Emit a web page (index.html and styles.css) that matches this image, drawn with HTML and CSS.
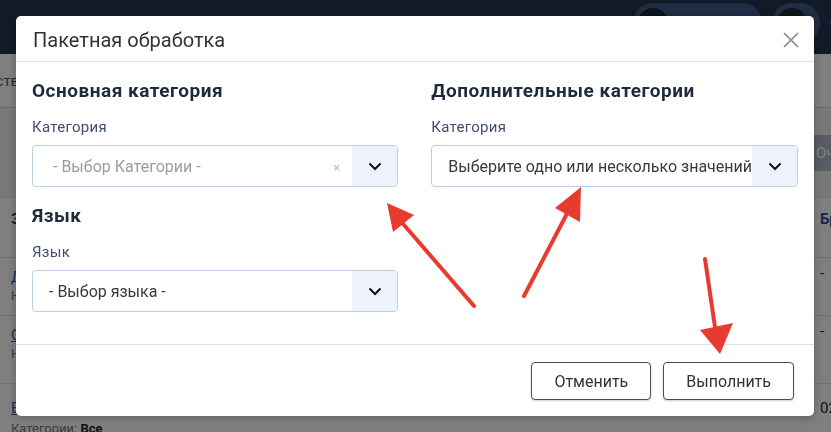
FILE: index.html
```html
<!DOCTYPE html>
<html lang="ru">
<head>
  <meta charset="UTF-8">
  <title>Пакетная обработка</title>
  <link rel="stylesheet" href="styles.css">
</head>
<body>

  <div class="page">
    <header class="topbar">
      <span class="topbar-count">⁝ 12 1</span>
      <div class="pill">
        <span class="pill-icon"><svg width="12" height="14" viewBox="0 0 12 14"><rect x="0" y="2" width="12" height="12" rx="2" fill="#cfd8e6"/><rect x="3" y="0" width="6" height="4" rx="1" fill="#cfd8e6"/></svg></span>
        <span>Задачи</span>
      </div>
      <div class="pill pill-user">
        <span class="pill-icon"><svg width="12" height="14" viewBox="0 0 12 14"><circle cx="6" cy="4" r="3.5" fill="#cfd8e6"/><path d="M0 14c0-4 2.5-6 6-6s6 2 6 6z" fill="#cfd8e6"/></svg></span>
      </div>
      <span class="topbar-more">С</span>
    </header>

    <nav class="tabs">
      <span class="tab">Свойств</span>
    </nav>

    <div class="filters">
      <button class="clear-btn">Очистить</button>
    </div>

    <div class="table">
      <div class="row row-head">
        <div class="cell">Заголовок</div>
        <div class="cell cell-right">Бренд</div>
      </div>
      <div class="row row-short">
        <div class="cell"><a href="#">Демо товар</a><small>Нет категорий</small></div>
        <div class="cell cell-right">-</div>
      </div>
      <div class="row">
        <div class="cell"><a href="#">Садовый набор</a><small>Нет категорий</small></div>
        <div class="cell cell-right">-</div>
      </div>
      <div class="row row-last">
        <div class="cell"><a href="#">Велосипед горный</a><small>Категории: <b>Все</b></small></div>
        <div class="cell cell-right">02</div>
      </div>
    </div>
  </div>

  <div class="backdrop">
    <div class="modal">
      <div class="modal-header">
        <h3>Пакетная обработка</h3>
        <button class="close-btn">
          <svg width="16" height="16" viewBox="0 0 16 16"><path d="M1 1L15 15M15 1L1 15" stroke="#8a8a8a" stroke-width="1.7"/></svg>
        </button>
      </div>

      <div class="modal-body">
        <div class="column">
          <div class="section">
            <h4>Основная категория</h4>
            <label>Категория</label>
            <div class="select">
              <span class="select-value placeholder">- Выбор Категории -</span>
              <span class="select-clear">×</span>
              <span class="select-arrow"><svg width="14" height="9" viewBox="0 0 14 9"><path d="M1.5 1.5L7 7l5.5-5.5" stroke="#111" stroke-width="2" fill="none"/></svg></span>
            </div>
          </div>
          <div class="section">
            <h4>Язык</h4>
            <label>Язык</label>
            <div class="select">
              <span class="select-value">- Выбор языка -</span>
              <span class="select-arrow"><svg width="14" height="9" viewBox="0 0 14 9"><path d="M1.5 1.5L7 7l5.5-5.5" stroke="#111" stroke-width="2" fill="none"/></svg></span>
            </div>
          </div>
        </div>
        <div class="column">
          <div class="section">
            <h4>Дополнительные категории</h4>
            <label>Категория</label>
            <div class="select">
              <span class="select-value">Выберите одно или несколько значений</span>
              <span class="select-arrow"><svg width="14" height="9" viewBox="0 0 14 9"><path d="M1.5 1.5L7 7l5.5-5.5" stroke="#111" stroke-width="2" fill="none"/></svg></span>
            </div>
          </div>
        </div>
      </div>

      <div class="modal-footer">
        <button class="btn">Отменить</button>
        <button class="btn">Выполнить</button>
      </div>
    </div>

    <!-- annotation arrows -->
    <svg class="arrows" width="831" height="432" viewBox="0 0 831 432">
      <g stroke="#e63b2e" stroke-width="4" stroke-linecap="round" fill="none">
        <path d="M474 306L398 218"/>
        <path d="M524 296L572 204"/>
        <path d="M705 259L716 334"/>
      </g>
      <g fill="#e63b2e">
        <path d="M387 203L393 232L414 215Z"/>
        <path d="M581 187L555 208L580 222Z"/>
        <path d="M720 354L700 330L733 323Z"/>
      </g>
    </svg>
  </div>

</body>
</html>
```

FILE: styles.css
```css
body {
  margin: 0;
  background-color: #f4f5f7;
  font-family: Roboto, "Noto Sans", sans-serif;
  color: #222;
}

/* page behind the dialog */
.page {
  width: 831px;
  height: 432px;
  overflow: hidden;
}

.topbar {
  height: 54px;
  background-color: #243450;
  display: flex;
  align-items: flex-start;
  justify-content: flex-end;
  gap: 10px;
  padding-top: 3px;
  box-sizing: border-box;
  white-space: nowrap;
  overflow: hidden;
}

.topbar-count {
  color: #cfd8e6;
  font-size: 13px;
  margin-top: 12px;
  margin-right: 18px;
}

.pill {
  display: flex;
  align-items: center;
  gap: 10px;
  height: 40px;
  padding: 0 5px;
  border-radius: 20px;
  background-color: #3e5c8a;
  color: #dfe6f0;
  font-size: 14px;
  width: 129px;
  box-sizing: border-box;
  flex-shrink: 0;
}

.pill-icon {
  width: 30px;
  height: 30px;
  border-radius: 50%;
  background-color: #1c2638;
  display: flex;
  align-items: center;
  justify-content: center;
}

.pill-user {
  width: 48px;
}

.topbar-more {
  color: #dfe6f0;
  font-size: 14px;
  margin-top: 12px;
  margin-right: -8px;
}

.tabs {
  height: 53px;
  border-bottom: 1px solid #cfd4da;
  display: flex;
  align-items: center;
  background-color: #fff;
}

.tab {
  margin-left: -40px;
  color: #4a5a72;
  font-size: 15px;
}

.filters {
  height: 89px;
  display: flex;
  align-items: center;
  width: 900px;
  background-color: #f0f1f3;
}

.clear-btn {
  margin-left: 810px;
  height: 36px;
  padding: 0 6px;
  border: none;
  border-radius: 4px;
  background-color: #b2bac6;
  color: #fff;
  font-family: inherit;
  font-size: 15px;
}

.table {
  width: 900px;
  background-color: #fff;
}

.row {
  display: grid;
  grid-template-columns: 809px 1fr;
  border-top: 1px solid #dde1e6;
  height: 67px;
}

.row-head {
  height: 59px;
  font-weight: bold;
  color: #243a5e;
}

.row-short {
  height: 57px;
}

.cell {
  padding: 10px 11px 0;
  font-size: 15px;
  display: flex;
  flex-direction: column;
}

.row-head .cell {
  padding-top: 12px;
}

.row-last .cell {
  padding-top: 15px;
}

.cell a {
  color: #2f66c8;
}

.cell small {
  font-size: 13px;
  color: #777;
  margin-top: 2px;
}

.row-last .cell small {
  margin-top: 4px;
}

.cell small b {
  color: #222;
}

.cell-right {
  padding-top: 6px;
}

.row-head .cell-right {
  color: #1f4f9a;
}

/* dialog */
.backdrop {
  position: fixed;
  inset: 0;
  background-color: rgba(0, 0, 0, 0.5);
  padding: 16px 17px 0 16px;
}

.modal {
  width: 798px;
  background-color: #fff;
  border-radius: 5px;
  box-shadow: 0 2px 8px rgba(0, 0, 0, 0.25);
}

.modal-header {
  display: flex;
  align-items: center;
  justify-content: space-between;
  padding: 12px 15px 9px 17px;
  border-bottom: 1px solid #dee2e6;
}

.modal-header h3 {
  margin: 0;
  font-size: 20px;
  line-height: 24px;
  font-weight: 400;
  color: #333;
}

.close-btn {
  background: none;
  border: none;
  padding: 0;
  width: 16px;
  height: 16px;
  display: flex;
  cursor: pointer;
}

.modal-body {
  display: grid;
  grid-template-columns: 1fr 1fr;
  column-gap: 33px;
  padding: 18px 16px 32px;
}

.section + .section {
  margin-top: 18px;
}

.section h4 {
  margin: 0 0 16px;
  font-size: 19px;
  line-height: 22px;
  font-weight: 700;
  letter-spacing: 0.5px;
  color: #1f2b3c;
}

.section label {
  display: block;
  margin-bottom: 9px;
  font-size: 15px;
  line-height: 18px;
  letter-spacing: 0.3px;
  color: #3f5070;
}

.select {
  display: flex;
  height: 42px;
  border: 1px solid #bccde6;
  border-radius: 4px;
  box-sizing: border-box;
  overflow: hidden;
}

.select-value {
  flex: 1;
  display: flex;
  align-items: center;
  padding-left: 16px;
  font-size: 16px;
  color: #3a3a3a;
  white-space: nowrap;
  overflow: hidden;
}

.select-value.placeholder {
  padding-left: 20px;
  color: #9c9c9c;
}

.select-clear {
  display: flex;
  align-items: center;
  padding: 2px 12px 0;
  font-size: 13px;
  color: #bdbdbd;
}

.select-arrow {
  width: 45px;
  flex-shrink: 0;
  display: flex;
  align-items: center;
  justify-content: center;
  background-color: #eef3fb;
}

.modal-footer {
  display: flex;
  justify-content: flex-end;
  gap: 12px;
  padding: 17px 20px 16px;
  border-top: 1px solid #dee2e6;
}

.btn {
  height: 38px;
  padding: 0 22px;
  background-color: #fff;
  border: 1px solid #4d4d4d;
  border-radius: 4px;
  box-shadow: 0 1px 2px rgba(0, 0, 0, 0.2);
  font-family: inherit;
  font-size: 16px;
  color: #333;
  cursor: pointer;
}

.arrows {
  position: absolute;
  top: 0;
  left: 0;
  pointer-events: none;
}
```
